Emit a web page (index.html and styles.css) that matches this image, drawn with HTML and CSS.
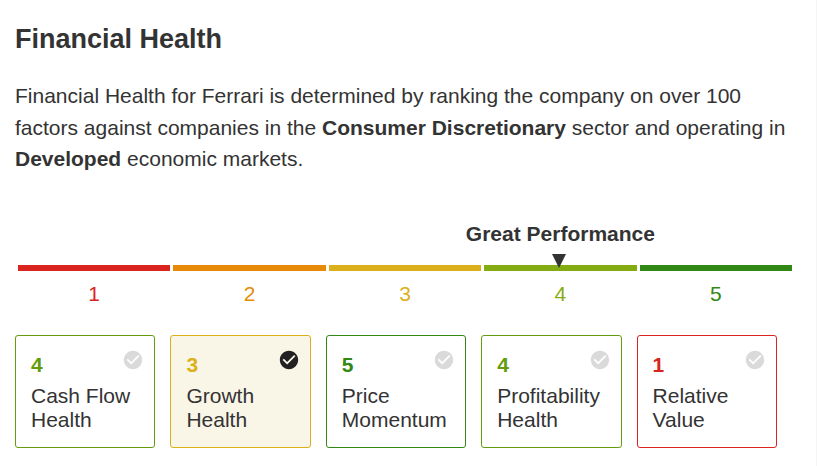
FILE: index.html
```html
<!DOCTYPE html>
<html lang="en">
<head>
    <meta charset="UTF-8">
    <meta name="viewport" content="width=device-width, initial-scale=1.0">
    <title>Financial Health</title>
    <link rel="stylesheet" href="styles.css">
</head>
<body>
    <svg class="sprite" aria-hidden="true">
        <symbol id="check" viewBox="0 0 24 24">
            <path d="M12 2C6.48 2 2 6.48 2 12s4.48 10 10 10 10-4.48 10-10S17.52 2 12 2zm-2 15l-5-5 1.41-1.41L10 14.17l7.59-7.59L19 8l-9 9z"/>
        </symbol>
    </svg>

    <section class="health">
        <h2>Financial Health</h2>
        <p class="intro">
            Financial Health for Ferrari is determined by ranking the company on over 100
            factors against companies in the <strong>Consumer Discretionary</strong> sector
            and operating in <strong>Developed</strong> economic markets.
        </p>

        <div class="scale">
            <div class="step score-1">
                <div class="bar"></div>
                <span>1</span>
            </div>
            <div class="step score-2">
                <div class="bar"></div>
                <span>2</span>
            </div>
            <div class="step score-3">
                <div class="bar"></div>
                <span>3</span>
            </div>
            <div class="step score-4 current">
                <strong class="label">Great Performance</strong>
                <div class="bar"></div>
                <span>4</span>
            </div>
            <div class="step score-5">
                <div class="bar"></div>
                <span>5</span>
            </div>
        </div>

        <div class="cards">
            <button type="button" class="card card-4" aria-pressed="false">
                <span class="card-head"><strong>4</strong><svg class="check"><use href="#check"/></svg></span>
                Cash Flow Health
            </button>
            <button type="button" class="card card-3 selected" aria-pressed="true">
                <span class="card-head"><strong>3</strong><svg class="check"><use href="#check"/></svg></span>
                Growth Health
            </button>
            <button type="button" class="card card-5" aria-pressed="false">
                <span class="card-head"><strong>5</strong><svg class="check"><use href="#check"/></svg></span>
                Price Momentum
            </button>
            <button type="button" class="card card-4" aria-pressed="false">
                <span class="card-head"><strong>4</strong><svg class="check"><use href="#check"/></svg></span>
                Profitability Health
            </button>
            <button type="button" class="card card-1" aria-pressed="false">
                <span class="card-head"><strong>1</strong><svg class="check"><use href="#check"/></svg></span>
                Relative Value
            </button>
        </div>
    </section>
</body>
</html>
```

FILE: styles.css
```css
* {
    box-sizing: border-box;
}
body {
    margin: 0;
    background-color: #fff;
    color: #333;
    font-family: Arial, "Liberation Sans", sans-serif;
    font-size: 21px;
    line-height: 24px;
}
.sprite {
    display: none;
}
.health {
    min-height: 100vh;
    padding: 23px 24px 18px 15px;
    border-right: 1px solid #f5f5f5;
}
h2 {
    margin: 0 0 25px;
    font-size: 27px;
    line-height: 32px;
}
.intro {
    margin: 0 0 47px;
    line-height: 1.5;
}

/* 1-5 performance scale */
.scale {
    display: grid;
    grid-template-columns: repeat(5, minmax(0, 1fr));
    align-items: end;
    gap: 3px;
    margin-bottom: 29px;
    padding-left: 3px;
    text-align: center;
}
.step {
    display: flex;
    flex-direction: column;
    align-items: center;
}
.bar {
    position: relative;
    width: 100%;
    height: 6px;
    margin-bottom: 11px;
    background-color: currentColor;
}
.label {
    margin-bottom: 19px;
    color: #333;
    white-space: nowrap;
}
.current .bar::before {
    content: "";
    position: absolute;
    bottom: 3px;
    left: 50%;
    margin-left: -8px;
    border: 7px solid transparent;
    border-top: 14px solid #333;
    border-bottom: 0;
}
.score-1 { color: #da2420; }
.score-2 { color: #e68a08; }
.score-3 { color: #dbb01a; }
.score-4 { color: #84ac12; }
.score-5 { color: #318814; }

/* factor cards */
.cards {
    display: grid;
    grid-template-columns: repeat(5, minmax(0, 1fr));
    gap: 15px;
    padding-right: 15px;
}
.card {
    padding: 13px 10px 15px 15px;
    border: 1px solid;
    border-radius: 3px;
    background-color: #fff;
    color: #333;
    font: inherit;
    text-align: left;
    cursor: pointer;
}
.card-head {
    display: flex;
    justify-content: space-between;
    align-items: flex-start;
    margin-bottom: 3px;
    line-height: 32px;
}
.check {
    width: 22px;
    height: 22px;
    fill: #dadada;
}
.card-1 { border-color: #da2420; }
.card-3 { border-color: #dbb01a; }
.card-4 { border-color: #639c0c; }
.card-5 { border-color: #318814; }
.card-1 strong { color: #da2420; }
.card-3 strong { color: #dbb01a; }
.card-4 strong { color: #639c0c; }
.card-5 strong { color: #318814; }
.selected {
    background-color: #faf6e7;
}
.selected .check {
    fill: #222;
}
```
